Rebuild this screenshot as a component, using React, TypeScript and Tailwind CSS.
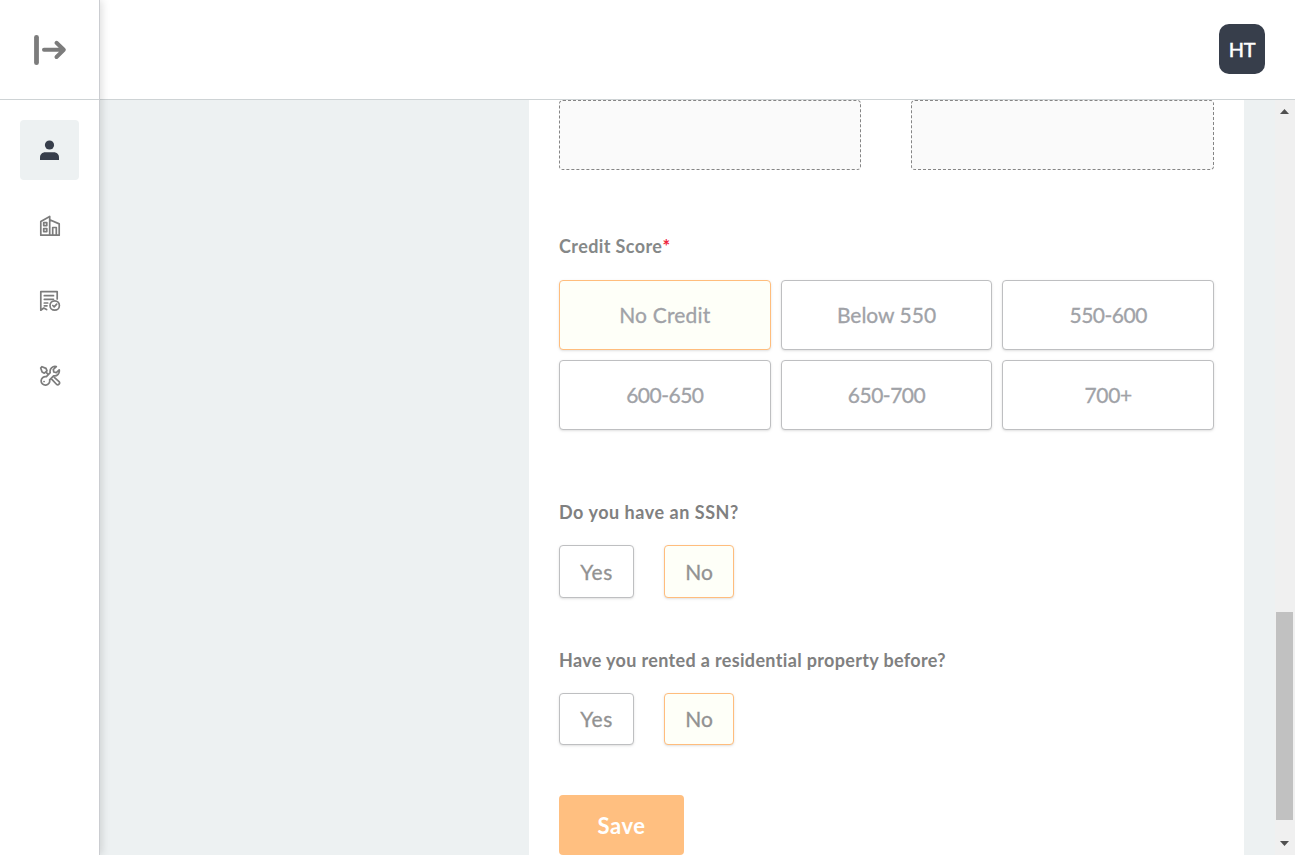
import type { ReactNode } from "react";
import clsx from "clsx";

function CollapseIcon() {
  return (
    <svg width="34" height="32" viewBox="0 0 34 32" fill="none" stroke="#7c7c7c" strokeLinecap="round" strokeLinejoin="round">
      <path d="M3.500 3.300v25.400" strokeWidth="4.800" />
      <path d="M11 15.800h19.500M23.500 8.800l7.300 7-7.300 7.200" strokeWidth="4" />
    </svg>
  );
}

function UserIcon() {
  return (
    <svg width="20" height="20" viewBox="0 0 20 20" fill="#373e4b">
      <circle cx="9.500" cy="5" r="4.600" />
      <path d="M0 20v-2.500C0 14.500 2.300 12.300 5.200 12.300h8.600c3 0 5.200 2.200 5.200 5.200V20z" />
    </svg>
  );
}

function BuildingIcon() {
  return (
    <svg className="mt-px" width="22" height="22" viewBox="0 0 22 22" fill="none" stroke="#7c7c7c" strokeWidth="1.700" strokeLinejoin="round">
      <path d="M1.800 20.200V6.500l8.900-5v18.700zM10.700 4.700l9.500 4.200v11.300H1.800" />
      <rect x="4.700" y="7.600" width="3.100" height="3" />
      <rect x="4.700" y="13.600" width="3.100" height="3" />
      <path d="M13.700 20v-7.500h3.600V20" />
    </svg>
  );
}

function ReceiptIcon() {
  return (
    <svg className="mt-px" width="22" height="22" viewBox="0 0 22 22" fill="none" stroke="#7c7c7c" strokeWidth="1.700" strokeLinecap="round" strokeLinejoin="round">
      <path d="M18.200 9V1.700H1.800v18.500l2.900-2.200 2.900 1.500" />
      <path d="M5.300 5.700h9.200M5.300 9.300h9.200M5.300 13h3.400M5.300 15.800H8" />
      <circle cx="15.700" cy="15.500" r="4.700" />
      <path d="m13.800 15.500 1.400 1.400 2.500-2.700" />
    </svg>
  );
}

function ToolsIcon() {
  return (
    <svg className="mt-px" width="22" height="22" viewBox="0 0 22 22" fill="none" stroke="#7c7c7c" strokeWidth="1.700" strokeLinecap="round" strokeLinejoin="round">
      <path d="M17.300 1.600a5 5 0 0 0-6.100 6L7.400 11.700a4.300 4.300 0 1 0 3.200 3.100l4-4a4.900 4.900 0 0 0 5.600-6L17.300 7.600l-2.500-.6-.5-2.500z" />
      <path d="M1.700 3 3 1.700l4 1.700 1 2.500-2.700 2.300-2.200-1.200zM7.200 7.400l1.700 1.700M12.900 14.400l4.800 5.100a1.900 1.900 0 0 0 2.600-2.600l-5-4.600" />
      <path d="M5 16.500h.1" />
    </svg>
  );
}

function NavItem({ active, children }: { active?: boolean; children: ReactNode }) {
  return (
    <a className={clsx("flex h-15 w-[59px] items-center justify-center rounded", active && "bg-[#edf1f2]")}>
      {children}
    </a>
  );
}

const scores = [
  { label: "No Credit", spacing: "tracking-[0.2px]" },
  { label: "Below 550", spacing: "tracking-[0px]" },
  { label: "550-600", spacing: "tracking-[-0.5px]" },
  { label: "600-650", spacing: "tracking-[-0.5px]" },
  { label: "650-700", spacing: "tracking-[-0.5px]" },
  { label: "700+", spacing: "tracking-[-0.4px]" },
];

function YesNo({ height }: { height: string }) {
  return (
    <div className={clsx("flex gap-[30px] text-[21px] text-[#929292] [-webkit-text-stroke:0.3px_#929292]", height)}>
      <button className="w-[75px] rounded border border-[#bebfc1] bg-white tracking-[0.5px] shadow-sm">Yes</button>
      <button className="w-[70px] rounded border border-[#ffbd7d] bg-[#fefff8] shadow-sm">No</button>
    </div>
  );
}

export default function App() {
  return (
    <div className="flex h-[855px] w-full overflow-hidden bg-white font-[Lato,sans-serif]">
      <aside className="z-10 w-[100px] shrink-0 border-r border-[#cbcdd1] bg-white shadow-[2px_0_8px_rgba(0,0,0,0.13)]">
        <div className="flex h-[100px] items-center justify-center border-b border-[#ced3d5]">
          <CollapseIcon />
        </div>
        <nav className="flex flex-col items-center gap-[15px] pt-5">
          <NavItem active><UserIcon /></NavItem>
          <NavItem><BuildingIcon /></NavItem>
          <NavItem><ReceiptIcon /></NavItem>
          <NavItem><ToolsIcon /></NavItem>
        </nav>
      </aside>
      <div className="flex min-w-0 flex-1 flex-col">
        <header className="flex h-[100px] shrink-0 items-start justify-end border-b border-[#ced3d5] pt-6 pr-[30px]">
          <div className="flex h-[50px] w-[46px] items-center justify-center rounded-[10px] bg-[#373e4b] pb-px text-xl tracking-[-0.3px] text-white [-webkit-text-stroke:0.5px_white]">HT</div>
        </header>
        <div className="flex min-h-0 flex-1 bg-[#edf1f2]">
          <main className="ml-[429px] flex w-[715px] shrink-0 flex-col bg-white px-[30px]">
            <div className="flex h-[70px] shrink-0 justify-between">
              <div className="w-[302px] rounded border border-dashed border-[#858585] bg-[#fafafa]" />
              <div className="w-[303px] rounded border border-dashed border-[#858585] bg-[#fafafa]" />
            </div>
            <h2 className="mt-[63px] h-[26px] shrink-0 text-lg leading-[26px] font-bold text-[#858888]">
              <span className="tracking-[0.4px]">Credit Score</span><span className="text-[#ef263c]">*</span>
            </h2>
            <div className="mt-[21px] grid h-[150px] shrink-0 grid-cols-3 gap-[10px] text-[21px] text-[#a0a2a7] [-webkit-text-stroke:0.3px_#a0a2a7]">
              {scores.map((score, index) => (
                <button key={score.label} className={clsx("rounded border shadow-sm", score.spacing, index === 0 ? "border-[#ffbd7d] bg-[#fefff8]" : "border-[#bebfc1] bg-white")}>
                  {score.label}
                </button>
              ))}
            </div>
            <h2 className="mt-[69px] h-[26px] shrink-0 text-lg leading-[26px] font-bold text-[#808080]"><span className="tracking-[0.53px]">Do you have an SSN?</span></h2>
            <div className="mt-5"><YesNo height="h-[53px]" /></div>
            <h2 className="mt-[49px] h-[26px] shrink-0 text-lg leading-[26px] font-bold text-[#808080]"><span className="tracking-[0.34px]">Have you rented a residential property before?</span></h2>
            <div className="mt-5"><YesNo height="h-[52px]" /></div>
            <button className="mt-[50px] h-15 w-[125px] shrink-0 rounded bg-[#ffbf80] text-[22px] font-bold tracking-[0.5px] text-white"><span>Save</span></button>
          </main>
          <div className="ml-auto flex w-5 flex-col items-center bg-[#f0f0f0] pt-[9px] pr-px">
            <svg width="9" height="5" viewBox="0 0 9 5" fill="#505050"><path d="M0 5 4.500 0 9 5z" /></svg>
            <div className="mt-[498px] mb-[21px] h-[208px] w-[17px] shrink-0 bg-[#c1c1c1]" />
            <svg width="9" height="5" viewBox="0 0 9 5" fill="#505050"><path d="m0 0 4.500 5L9 0z" /></svg>
          </div>
        </div>
      </div>
    </div>
  );
}
